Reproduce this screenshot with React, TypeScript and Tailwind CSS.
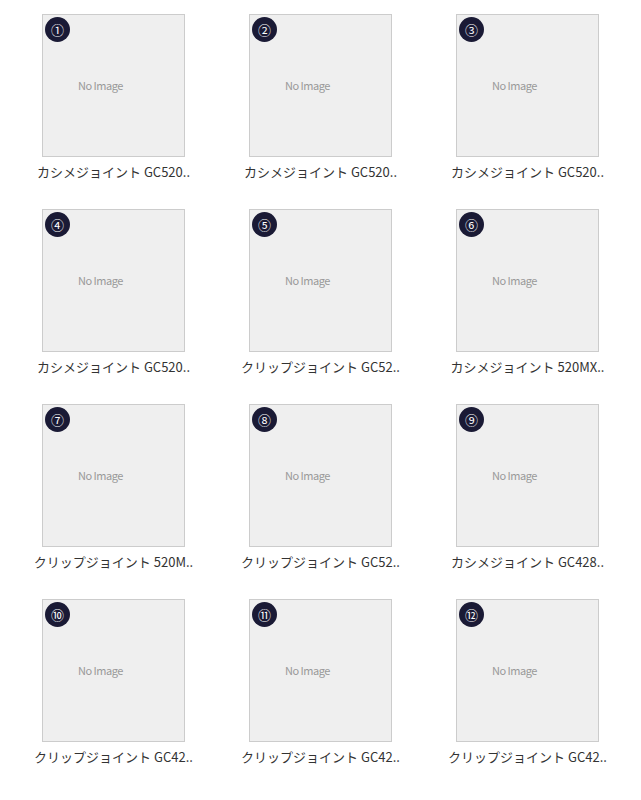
const items = [
  { no: '①', name: 'カシメジョイント GC520..' },
  { no: '②', name: 'カシメジョイント GC520..' },
  { no: '③', name: 'カシメジョイント GC520..' },
  { no: '④', name: 'カシメジョイント GC520..' },
  { no: '⑤', name: 'クリップジョイント GC52..' },
  { no: '⑥', name: 'カシメジョイント 520MX..' },
  { no: '⑦', name: 'クリップジョイント 520M..' },
  { no: '⑧', name: 'クリップジョイント GC52..' },
  { no: '⑨', name: 'カシメジョイント GC428..' },
  { no: '⑩', name: 'クリップジョイント GC42..' },
  { no: '⑪', name: 'クリップジョイント GC42..' },
  { no: '⑫', name: 'クリップジョイント GC42..' },
];

export default function App() {
  return (
    <div
      className="w-[641px] h-[800px] bg-white px-[10px]"
      style={{ fontFamily: '"Noto Sans CJK JP", "Noto Sans", sans-serif' }}
    >
      <div className="grid grid-cols-3">
        {items.map((item, i) => (
          <div key={i} className="flex flex-col items-center pt-[14px] pb-[13px]">
            <div className="relative w-[143px] h-[143px] border border-[#cccccc] bg-[#efefef] flex items-center pl-[35px]">
              <span className="absolute top-[2px] left-[2px] w-[25px] h-[25px] rounded-full bg-[#1a1a35] text-white text-[13px] leading-none flex items-center justify-center">
                {item.no}
              </span>
              <span className="text-[11px] text-[#999999] tracking-[-0.5px]">No Image</span>
            </div>
            <p className="mt-[5px] text-[13px] leading-5 text-[#333333] whitespace-nowrap">{item.name}</p>
          </div>
        ))}
      </div>
    </div>
  );
}
